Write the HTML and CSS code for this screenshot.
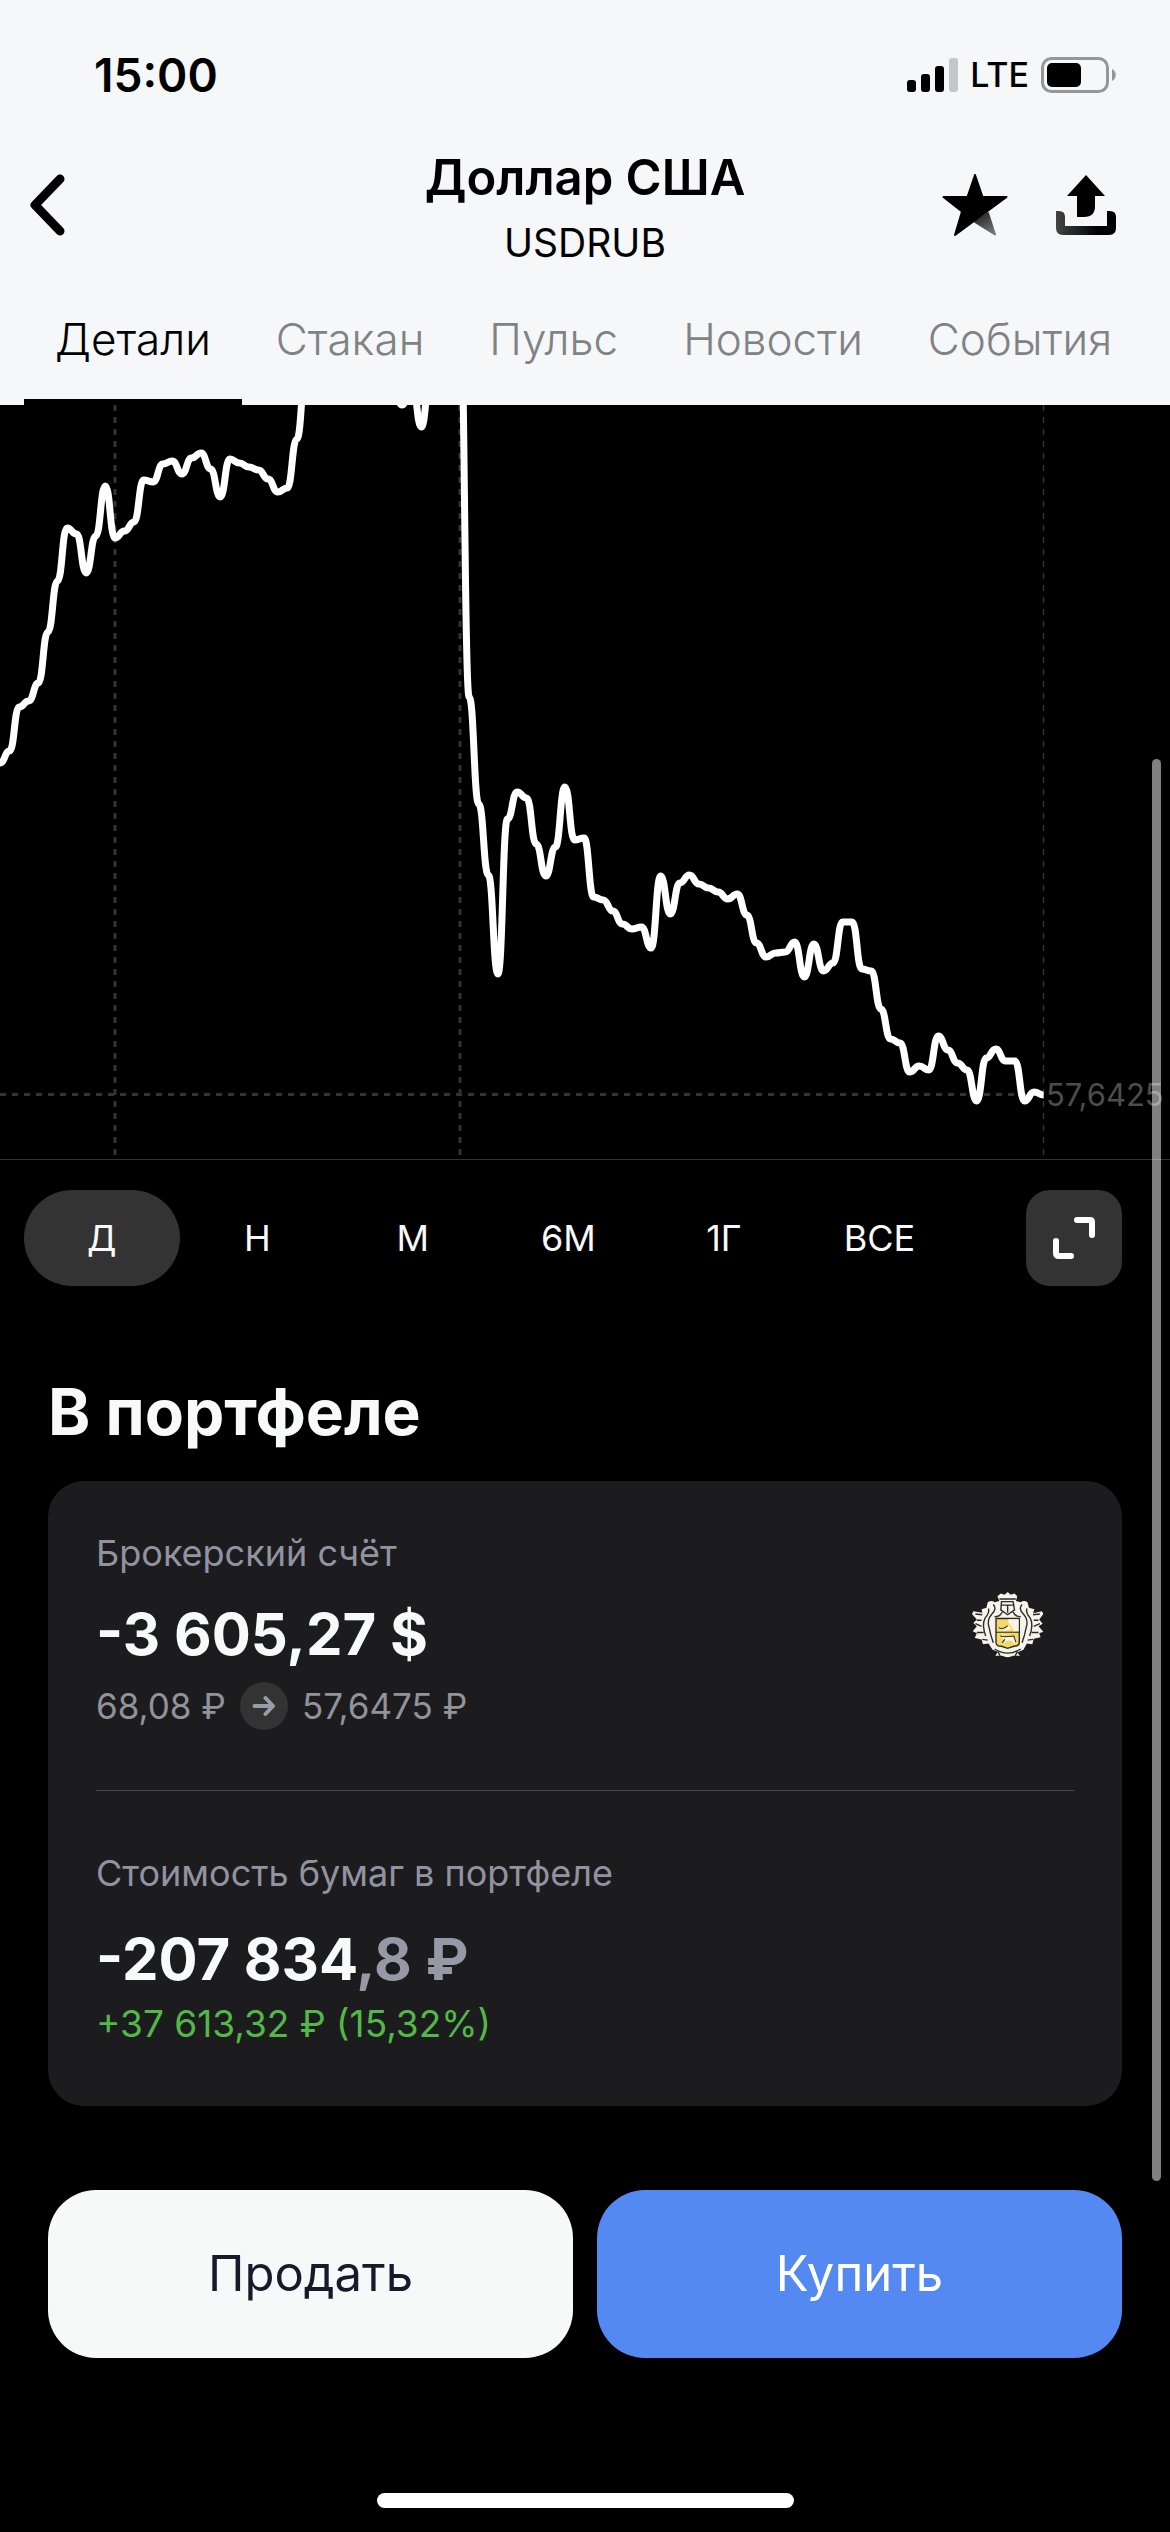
FILE: index.html
```html
<!DOCTYPE html>
<html lang="ru">
<head>
<meta charset="utf-8">
<meta name="viewport" content="width=device-width, initial-scale=1">
<title>Доллар США — USDRUB</title>
<link rel="stylesheet" href="styles.css">
</head>
<body>
<header class="header">
  <div class="status">
    <time class="status-time">15:00</time>
    <div class="status-icons">
      <svg width="51" height="34" viewBox="0 0 51 34" aria-hidden="true">
        <rect x="0" y="22" width="9" height="12" rx="3"/>
        <rect x="14" y="16" width="9" height="18" rx="3"/>
        <rect x="28" y="8" width="9" height="26" rx="3"/>
        <rect x="42" y="0" width="9" height="34" rx="3" fill="#c4c6c8"/>
      </svg>
      <span class="status-net">LTE</span>
      <svg width="75" height="36" viewBox="0 0 75 36" aria-hidden="true">
        <rect x="1.5" y="1.5" width="65" height="33" rx="9" fill="none" stroke="#949698" stroke-width="3"/>
        <rect x="6" y="6" width="34" height="24" rx="5"/>
        <path d="M71 12c5 2 5 10 0 12z" fill="#949698"/>
      </svg>
    </div>
  </div>
  <div class="nav">
    <button class="back" type="button" aria-label="Назад">
      <svg width="36" height="62" viewBox="0 0 36 62" aria-hidden="true"><path d="M30 5L5 31L30 57" fill="none" stroke="#000" stroke-width="9" stroke-linecap="round" stroke-linejoin="round"/></svg>
    </button>
    <div class="nav-title">
      <h1 class="title">Доллар США</h1>
      <p class="ticker">USDRUB</p>
    </div>
    <div class="nav-actions">
      <button type="button" aria-label="В избранное">
        <svg width="66" height="64" viewBox="0 0 66 64" aria-hidden="true">
          <defs><linearGradient id="star-shade" x1="0.2" y1="0" x2="0.8" y2="1"><stop offset="0" stop-color="#222"/><stop offset="1" stop-color="#777"/></linearGradient></defs>
          <path d="M46 40L53 61.500L33 49z" fill="url(#star-shade)" stroke="url(#star-shade)" stroke-width="2" stroke-linejoin="round"/>
          <path d="M33 2L40.500 24H64.500L13 62L20 38.500L1.500 24H25.500z" stroke="#000" stroke-width="2" stroke-linejoin="round"/>
        </svg>
      </button>
      <button type="button" aria-label="Поделиться">
        <svg width="60" height="60" viewBox="0 0 60 60" aria-hidden="true">
          <defs><linearGradient id="tray-shade" x1="0" y1="0" x2="1" y2="0"><stop offset="0" stop-color="#444"/><stop offset="0.7" stop-color="#000"/></linearGradient></defs>
          <path d="M30 0L49 21H39V31Q39 42 28 42H21V21H11z"/>
          <path d="M0 36H3Q9 36 9 42V51H51V36H54Q60 36 60 42V53Q60 60 53 60H7Q0 60 0 53z" fill="url(#tray-shade)"/>
        </svg>
      </button>
    </div>
  </div>
  <nav class="tabs">
    <a class="tab tab-active" href="#details" aria-current="page">Детали</a>
    <a class="tab" href="#book">Стакан</a>
    <a class="tab" href="#pulse">Пульс</a>
    <a class="tab" href="#news">Новости</a>
    <a class="tab" href="#events">События</a>
  </nav>
</header>

<main class="content" id="details">
  <svg class="chart" viewBox="0 405 1170 755" role="img" aria-label="График курса за день">
    <g fill="none" stroke="#333" stroke-dasharray="6 6">
      <path d="M115 405V1155M460 405V1155M0 1094.500H1043" stroke-width="3"/>
      <path d="M1043.500 405V1155" stroke-width="1.500"/>
    </g>
    <path d="M0 1159.500H1170" stroke="#333" stroke-width="1"/>
    <path id="price-line" fill="none" stroke="#fff" stroke-width="7" stroke-linejoin="round"/>
    <text class="price-label" x="1046" y="1106">57,6425</text>
  </svg>

  <div class="range-row">
    <div class="ranges">
      <button class="range range-active" type="button" aria-pressed="true">Д</button>
      <button class="range" type="button">Н</button>
      <button class="range" type="button">М</button>
      <button class="range" type="button">6М</button>
      <button class="range" type="button">1Г</button>
      <button class="range" type="button">ВСЕ</button>
    </div>
    <button class="expand" type="button" aria-label="На весь экран">
      <svg width="42" height="42" viewBox="0 0 42 42" aria-hidden="true"><path d="M24 3H37Q39 3 39 5V18M18 39H6Q3 39 3 36V24" fill="none" stroke="#fff" stroke-width="6" stroke-linecap="round"/></svg>
    </button>
  </div>

  <section class="portfolio">
    <h2 class="heading">В портфеле</h2>
    <div class="card">
      <div class="position">
        <div>
          <p class="label">Брокерский счёт</p>
          <p class="amount">-3 605,27 $</p>
          <p class="change">
            <span>68,08 ₽</span>
            <svg width="48" height="48" viewBox="0 0 48 48" aria-hidden="true"><circle cx="24" cy="24" r="24" fill="#333"/><path d="M14.500 24H32M25.500 16L33 24L25.500 32" fill="none" stroke="#9a9ba6" stroke-width="4" stroke-linecap="round" stroke-linejoin="round"/></svg>
            <span>57,6475 ₽</span>
          </p>
        </div>
        <svg class="crest" width="72" height="66" viewBox="0 0 210 192" aria-hidden="true">
          <path d="M74 12L84 4L95 8L104 0L113 8L124 4L132 12L128 26L142 30Q152 22 162 30L166 46L182 50L178 62L204 56L208 64L196 80L206 92L194 100L208 116L196 120L200 132L180 136L176 152L160 150L150 168L132 176L140 186L120 186Q104 194 88 186L68 186L76 174L60 168L48 150L32 152L28 138L8 134L14 120L2 114L14 100L4 90L14 80L0 64L4 56L30 60L28 50L42 46L46 30Q58 22 66 30L80 26z" fill="#f4f3ec"/>
          <g fill="none" stroke="#2a2a28" stroke-width="4">
            <path d="M62 36Q74 48 58 64Q42 82 50 104Q54 126 62 148M48 48Q52 60 38 76Q28 96 40 128M30 66L10 64M28 82L14 82M28 100L10 92M34 118L14 118M46 140L30 138"/>
            <path d="M146 36Q134 48 150 64Q166 82 158 104Q154 126 146 148M160 48Q156 60 170 76Q180 96 168 128M178 66L198 64M180 82L194 82M180 100L198 92M174 118L194 118M162 140L178 138"/>
            <path d="M80 20H128M86 28L84 52L104 66L124 52L120 28zM86 38H120M104 40V60M66 72Q82 72 88 58M142 72Q126 72 120 58M66 166Q104 190 142 166M76 174L82 186M132 174L126 186"/>
          </g>
          <path d="M70 77H138V146Q138 158 122 158L104 164L86 158Q70 158 70 146z" fill="#f5d866" stroke="#2a2a28" stroke-width="4"/>
          <path d="M106 79H136V114H122Q116 96 106 90zM78 104Q92 112 106 96L116 108Q98 116 78 110zM82 128L90 122L96 130L120 128L130 140L124 152L116 142H100L92 152L94 138z" fill="#f7f4e6"/>
          <path d="M70 117H138M78 104Q92 112 104 98M82 128L96 130L122 128L128 146M96 138L88 148" fill="none" stroke="#2a2a28" stroke-width="3"/>
        </svg>
      </div>
      <hr class="divider">
      <p class="label">Стоимость бумаг в портфеле</p>
      <p class="amount amount-total">-207 834<span class="fraction">,8 ₽</span></p>
      <p class="profit">+37 613,32 ₽ (15,32%)</p>
    </div>
  </section>

  <div class="actions">
    <button class="action action-sell" type="button">Продать</button>
    <button class="action action-buy" type="button">Купить</button>
  </div>
  <div class="scrollbar" aria-hidden="true"></div>
</main>
<div class="home-bar" aria-hidden="true"></div>
<script src="chart.js"></script>
</body>
</html>
```
FILE: styles.css
```css
* {
  box-sizing: border-box;
}

body {
  margin: 0;
  min-height: 100vh;
  display: flex;
  flex-direction: column;
  background: #000;
  color: #f8f9f9;
  font-family: Inter, "Liberation Sans", sans-serif;
  font-size: 36px;
  line-height: 48px;
}

h1, h2, p {
  margin: 0;
}

button {
  margin: 0;
  padding: 0;
  border: 0;
  background: none;
  color: inherit;
  font: inherit;
}

svg {
  display: block;
  flex: none;
}

.header {
  background: #f5f7f9;
  color: #000;
}

.status {
  display: flex;
  justify-content: space-between;
  align-items: center;
  padding: 51px 54px 0 94px;
}

.status-time {
  font-size: 46px;
  font-weight: 600;
}

.status-icons {
  display: flex;
  align-items: center;
  gap: 12px;
}

.status-net {
  font-size: 34px;
  font-weight: 500;
}

.nav {
  display: grid;
  grid-template-columns: 1fr auto 1fr;
  align-items: start;
  padding: 46px 54px 0;
}

.back {
  justify-self: start;
  margin: 29px 0 0 -24px;
}

.nav-title {
  text-align: center;
}

.title {
  font-size: 49px;
  font-weight: 600;
  line-height: 65px;
}

.ticker {
  font-size: 39px;
  line-height: 65px;
}

.nav-actions {
  display: flex;
  justify-content: flex-end;
  align-items: center;
  gap: 48px;
  padding-top: 28px;
}

.tabs {
  display: flex;
  gap: 3px;
  padding: 30px 24px 0;
}

.tab {
  padding: 12px 31px 37px;
  border-bottom: 6px solid transparent;
  color: #808284;
  font-size: 44px;
  font-weight: 300;
  line-height: 45px;
  text-decoration: none;
}

.tab-active {
  border-color: #000;
  color: #000;
}

.content {
  position: relative;
}

.chart {
  width: 100%;
  height: auto;
}

.price-label {
  fill: #4d4d4d;
  font-size: 31px;
}

.range-row {
  display: flex;
  justify-content: space-between;
  padding: 30px 48px 0 24px;
}

.ranges {
  display: grid;
  grid-template-columns: repeat(6, 1fr);
  width: 85%;
}

.range {
  height: 96px;
  border-radius: 48px;
}

.range-active {
  background: #333;
}

.expand {
  display: grid;
  place-items: center;
  width: 96px;
  height: 96px;
  border-radius: 24px;
  background: #333;
}

.portfolio {
  padding: 84px 48px 0;
}

.heading {
  font-size: 64px;
  font-weight: 700;
  line-height: 84px;
}

.card {
  margin-top: 27px;
  padding: 48px 48px 58px;
  border-radius: 36px;
  background: #1c1c1e;
}

.position {
  display: flex;
  justify-content: space-between;
  align-items: flex-start;
  padding-right: 30px;
}

.crest {
  margin-top: 63px;
}

.label {
  color: #9293a0;
}

.amount {
  padding-top: 27px;
  font-size: 58px;
  font-weight: 700;
  line-height: 60px;
}

.change {
  display: flex;
  align-items: center;
  gap: 14px;
  padding-top: 18px;
  color: #929399;
  font-size: 35px;
}

.divider {
  height: 1px;
  margin: 60px 0 58px;
  border: 0;
  background: #48484a;
}

.amount-total {
  padding-top: 32px;
}

.fraction {
  color: #9698a5;
}

.profit {
  padding-top: 11px;
  color: #53b946;
  font-size: 37px;
}

.actions {
  display: grid;
  grid-template-columns: 1fr 1fr;
  gap: 24px;
  padding: 84px 48px 0;
}

.action {
  height: 168px;
  border-radius: 48px;
  font-size: 49px;
}

.action-sell {
  background: #f7f9f9;
  color: #161a2b;
}

.action-buy {
  background: #5589f2;
  color: #fff;
}

.scrollbar {
  position: absolute;
  top: 354px;
  right: 9px;
  width: 9px;
  height: 1422px;
  border-radius: 5px;
  background: rgba(255, 255, 255, 0.5);
}

.home-bar {
  align-self: center;
  width: 417px;
  height: 15px;
  margin: auto 0 24px;
  border-radius: 8px;
  background: #fff;
}
```
FILE: chart.js
```js
// Vertical positions of the price samples, spaced evenly along the time axis.
const levels = [
  763, 751, 707, 701, 683, 632, 581, 528, 534, 573, 536, 486, 538, 531, 522, 480, 482,
  464, 461, 474, 458, 453, 469, 497, 459, 463, 467, 470, 479, 492, 488, 439, 365,
  350, 340, 330, 330, 340, 350, 360, 370, 385, 405, 380, 427, 370, 340, 320, 285,
  697, 804, 875, 974, 819, 792, 798, 844, 876, 847, 787, 840, 838, 897, 900, 911,
  924, 929, 927, 948, 876, 914, 883, 875, 884, 888, 892, 899, 894, 915, 943, 957,
  953, 952, 942, 977, 944, 971, 963, 922, 922, 969, 971, 1009, 1039, 1043, 1072,
  1066, 1070, 1036, 1050, 1063, 1070, 1101, 1058, 1049, 1061, 1061, 1101, 1092, 1095
];
const step = 9.575;

let d = `M0 ${levels[0]}`;
for (let i = 1; i < levels.length; i++) {
  const x = i * step;
  const mid = x - step / 2;
  d += `C${mid} ${levels[i - 1]} ${mid} ${levels[i]} ${x} ${levels[i]}`;
}
document.getElementById("price-line").setAttribute("d", d);
```
